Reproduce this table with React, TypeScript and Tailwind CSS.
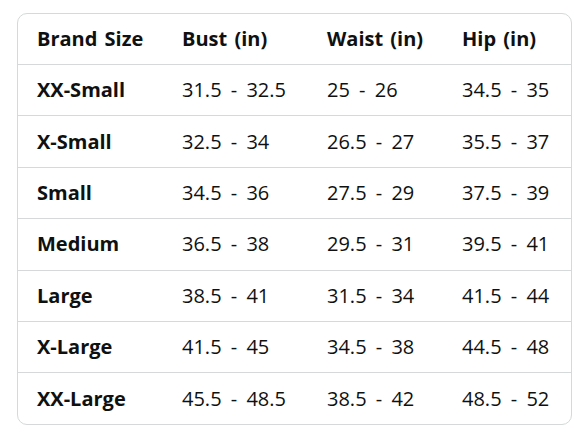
const rows = [
  ["XX-Small", "31.5 - 32.5", "25 - 26", "34.5 - 35"],
  ["X-Small", "32.5 - 34", "26.5 - 27", "35.5 - 37"],
  ["Small", "34.5 - 36", "27.5 - 29", "37.5 - 39"],
  ["Medium", "36.5 - 38", "29.5 - 31", "39.5 - 41"],
  ["Large", "38.5 - 41", "31.5 - 34", "41.5 - 44"],
  ["X-Large", "41.5 - 45", "34.5 - 38", "44.5 - 48"],
  ["XX-Large", "45.5 - 48.5", "38.5 - 42", "48.5 - 52"],
];

const headers = ["Brand Size", "Bust (in)", "Waist (in)", "Hip (in)"];
const cols = "grid-cols-[145px_145px_135px_1fr]";

export default function App() {
  return (
    <div
      className="w-[588px] h-[441px] bg-white pt-[13px] pl-[17px]"
      style={{ fontFamily: '"Open Sans", "Noto Sans", sans-serif' }}
    >
      <div className="w-[555px] rounded-[10px] border border-[#d5d9d9] overflow-hidden text-[#0f1111] text-[20px]">
        <div className={`grid ${cols} h-[50px] items-center pl-[19px] font-bold [word-spacing:2px]`}>
          {headers.map((h) => (
            <div key={h}>{h}</div>
          ))}
        </div>
        {rows.map((r) => (
          <div
            key={r[0]}
            className={`grid ${cols} h-[51.4px] items-center pl-[19px] border-t border-[#d5d9d9] [word-spacing:4px]`}
          >
            <div className="font-bold">{r[0]}</div>
            <div>{r[1]}</div>
            <div>{r[2]}</div>
            <div>{r[3]}</div>
          </div>
        ))}
      </div>
    </div>
  );
}
